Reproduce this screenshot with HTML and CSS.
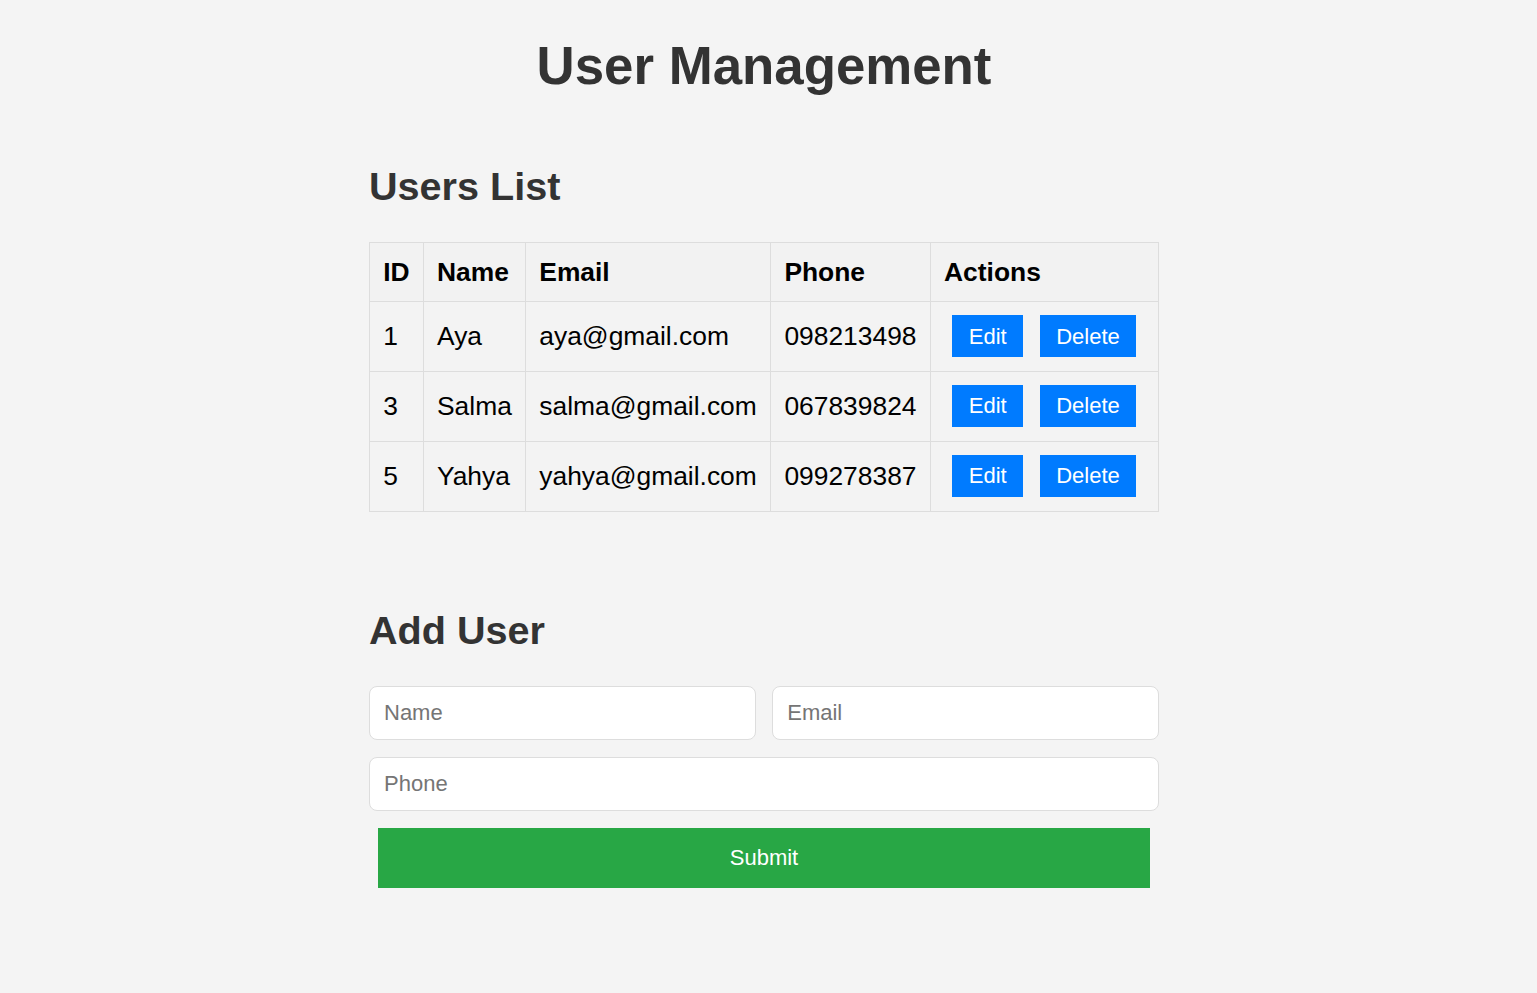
FILE: index.html
```html
<!DOCTYPE html>
<html lang="en">
<head>
<meta charset="utf-8">
<title>User Management</title>
<link rel="stylesheet" href="styles.css">
</head>
<body>
<div class="page">
  <h1 class="title">User Management</h1>
  <div class="container">
    <section class="section section-list">
      <h2 class="heading">Users List</h2>
      <table class="users">
        <thead>
          <tr><th>ID</th><th>Name</th><th>Email</th><th>Phone</th><th>Actions</th></tr>
        </thead>
        <tbody>
          <tr><td>1</td><td>Aya</td><td>aya@gmail.com</td><td>098213498</td><td><div class="actions"><button class="btn">Edit</button><button class="btn">Delete</button></div></td></tr>
          <tr><td>3</td><td>Salma</td><td>salma@gmail.com</td><td>067839824</td><td><div class="actions"><button class="btn">Edit</button><button class="btn">Delete</button></div></td></tr>
          <tr><td>5</td><td>Yahya</td><td>yahya@gmail.com</td><td>099278387</td><td><div class="actions"><button class="btn">Edit</button><button class="btn">Delete</button></div></td></tr>
        </tbody>
      </table>
    </section>
    <section class="section section-form">
      <h2 class="heading">Add User</h2>
      <form class="form">
        <div class="form-row two">
          <input class="field" type="text" placeholder="Name">
          <input class="field" type="email" placeholder="Email">
        </div>
        <div class="form-row">
          <input class="field" type="tel" placeholder="Phone">
        </div>
        <button type="button" class="submit">Submit</button>
      </form>
    </section>
  </div>
</div>
</body>
</html>
```

FILE: styles.css
```css
html, body {
  margin: 0;
  padding: 0;
  background: #f4f4f4;
}

body {
  font-family: "Liberation Sans", Arial, sans-serif;
  color: #000;
}

.page {
  margin-right: 9px;
  padding-top: 35.4px;
  padding-bottom: 40px;
}

.title {
  margin: 0;
  font-size: 52.8px;
  font-weight: bold;
  color: #333;
  text-align: center;
  line-height: normal;
}

.container {
  width: 790px;
  margin: 0 auto;
}

.section-list {
  padding-top: 68px;
}

.section-form {
  padding-top: 96.5px;
}

.heading {
  margin: 0 0 32px;
  font-size: 39.6px;
  font-weight: bold;
  color: #333;
  line-height: normal;
}

.section-list .heading {
  margin-bottom: 32.4px;
}

.section-form .heading {
  margin-bottom: 32.5px;
}

.users {
  width: 100%;
  border-collapse: collapse;
  font-size: 26.4px;
}

.users th,
.users td {
  border: 1px solid #ddd;
  padding: 13.5px 13.2px;
  text-align: left;
  vertical-align: middle;
  white-space: nowrap;
  line-height: 31px;
}

.users th {
  background: #f2f2f2;
  font-weight: bold;
  padding-top: 14px;
  padding-bottom: 13px;
}

.users td {
  background: #f3f3f3;
}

.actions {
  display: flex;
  align-items: center;
}

.btn {
  margin: 0 8.25px;
  padding: 8.25px 16.5px;
  border: none;
  border-radius: 0;
  background: #007bff;
  color: #fff;
  font-family: "Liberation Sans", Arial, sans-serif;
  font-size: 22px;
  line-height: 25.4px;
  cursor: pointer;
}

.form {
  display: flex;
  flex-direction: column;
}

.form-row {
  display: grid;
  grid-template-columns: 1fr;
  gap: 16.5px;
  margin-bottom: 16.5px;
}

.form-row.two {
  grid-template-columns: 1fr 1fr;
}

.field {
  box-sizing: border-box;
  width: 100%;
  height: 54.5px;
  margin: 0;
  padding: 0 14px;
  border: 1px solid #ddd;
  border-radius: 8px;
  background: #fff;
  font-family: "Liberation Sans", Arial, sans-serif;
  font-size: 22px;
  color: #000;
}

.field::placeholder {
  color: #757575;
}

.submit {
  box-sizing: border-box;
  width: calc(100% - 18px);
  margin: 0.5px 9px 0;
  padding: 16.8px;
  border: none;
  background: #28a745;
  color: #fff;
  font-family: "Liberation Sans", Arial, sans-serif;
  font-size: 22px;
  line-height: normal;
  cursor: pointer;
}
```
